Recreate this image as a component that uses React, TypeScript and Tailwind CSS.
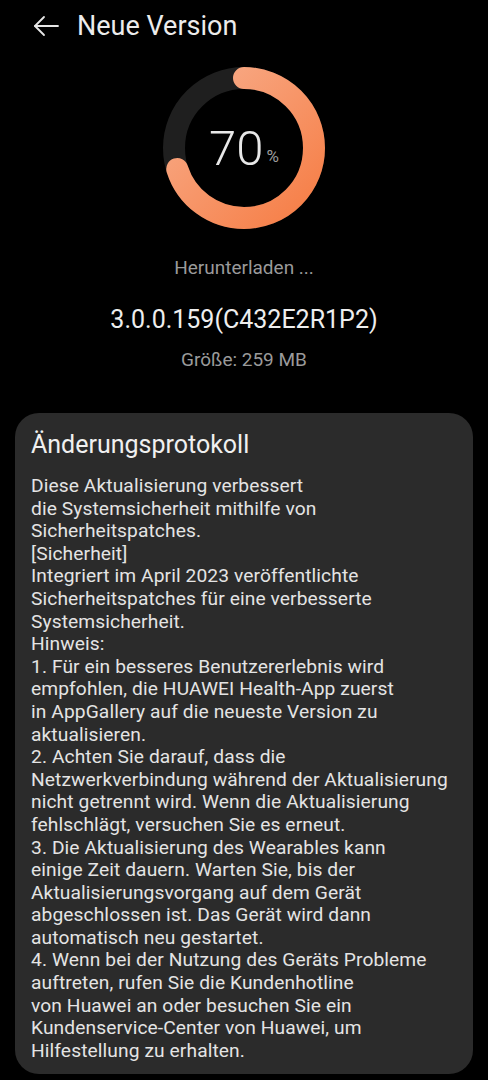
import React from 'react';

const changelog = [
  'Diese Aktualisierung verbessert',
  'die Systemsicherheit mithilfe von',
  'Sicherheitspatches.',
  '[Sicherheit]',
  'Integriert im April 2023 veröffentlichte',
  'Sicherheitspatches für eine verbesserte',
  'Systemsicherheit.',
  'Hinweis:',
  '1. Für ein besseres Benutzererlebnis wird',
  'empfohlen, die HUAWEI Health-App zuerst',
  'in AppGallery auf die neueste Version zu',
  'aktualisieren.',
  '2. Achten Sie darauf, dass die',
  'Netzwerkverbindung während der Aktualisierung',
  'nicht getrennt wird. Wenn die Aktualisierung',
  'fehlschlägt, versuchen Sie es erneut.',
  '3. Die Aktualisierung des Wearables kann',
  'einige Zeit dauern. Warten Sie, bis der',
  'Aktualisierungsvorgang auf dem Gerät',
  'abgeschlossen ist. Das Gerät wird dann',
  'automatisch neu gestartet.',
  '4. Wenn bei der Nutzung des Geräts Probleme',
  'auftreten, rufen Sie die Kundenhotline',
  'von Huawei an oder besuchen Sie ein',
  'Kundenservice-Center von Huawei, um',
  'Hilfestellung zu erhalten.',
];

function ProgressRing({ percent }: { percent: number }) {
  const r = 70;
  const c = 2 * Math.PI * r;
  return (
    <div className="relative w-[162px] h-[162px]">
      <svg width="162" height="162" viewBox="0 0 162 162">
        <defs>
          <linearGradient id="ring" x1="1" y1="0" x2="0" y2="1">
            <stop offset="0%" stopColor="#f8ae8c" />
            <stop offset="100%" stopColor="#f67d45" />
          </linearGradient>
        </defs>
        <circle cx="81" cy="81" r={r} fill="none" stroke="#1f1f1f" strokeWidth="22" />
        <circle
          cx="81"
          cy="81"
          r={r}
          fill="none"
          stroke="url(#ring)"
          strokeWidth="22"
          strokeLinecap="round"
          strokeDasharray={`${(c * percent) / 100} ${c}`}
          transform="rotate(-90 81 81)"
        />
      </svg>
      <div className="absolute inset-0 flex items-center justify-center">
        <span className="text-[49px] leading-none text-[#e8e8e8] font-light">{percent}</span>
        <span className="text-[17px] text-[#9c9c9c] mt-[18px] ml-[3px]">%</span>
      </div>
    </div>
  );
}

export default function App() {
  return (
    <div className="w-[488px] min-h-[1080px] bg-black font-['Roboto',sans-serif] overflow-hidden">
      {/* Header */}
      <div className="flex items-center h-[52px] pl-[33px]">
        <svg width="26" height="22" viewBox="0 0 26 22" fill="none" stroke="#e6e6e6" strokeWidth="1.8" strokeLinecap="round" strokeLinejoin="round">
          <path d="M25 11H2" />
          <path d="M11 2L2 11l9 9" />
        </svg>
        <h1 className="ml-[18px] text-[27px] text-[#ececec]">Neue Version</h1>
      </div>

      <div className="flex flex-col items-center mt-[15px]">
        <ProgressRing percent={70} />
        <div className="mt-[27px] text-[19px] leading-[24px] text-[#9a9a9a]">Herunterladen ...</div>
        <div className="mt-[25px] text-[25px] leading-[30px] text-[#eeeeee]">3.0.0.159(C432E2R1P2)</div>
        <div className="mt-[13px] text-[19px] leading-[24px] text-[#9a9a9a]">Größe: 259 MB</div>
      </div>

      {/* Changelog card */}
      <div className="mx-[15px] mt-[41px] rounded-[24px] bg-[#2b2b2b] px-[16px] pt-[15px] pb-[12px]">
        <h2 className="text-[25px] text-[#f0f0f0] leading-[34px]">Änderungsprotokoll</h2>
        <div className="mt-[13px] text-[19.2px] tracking-[0.1px] leading-[22.6px] text-[#e4e4e4]">
          {changelog.map((line, i) => (
            <div key={i} className="whitespace-nowrap">{line}</div>
          ))}
        </div>
      </div>
    </div>
  );
}
